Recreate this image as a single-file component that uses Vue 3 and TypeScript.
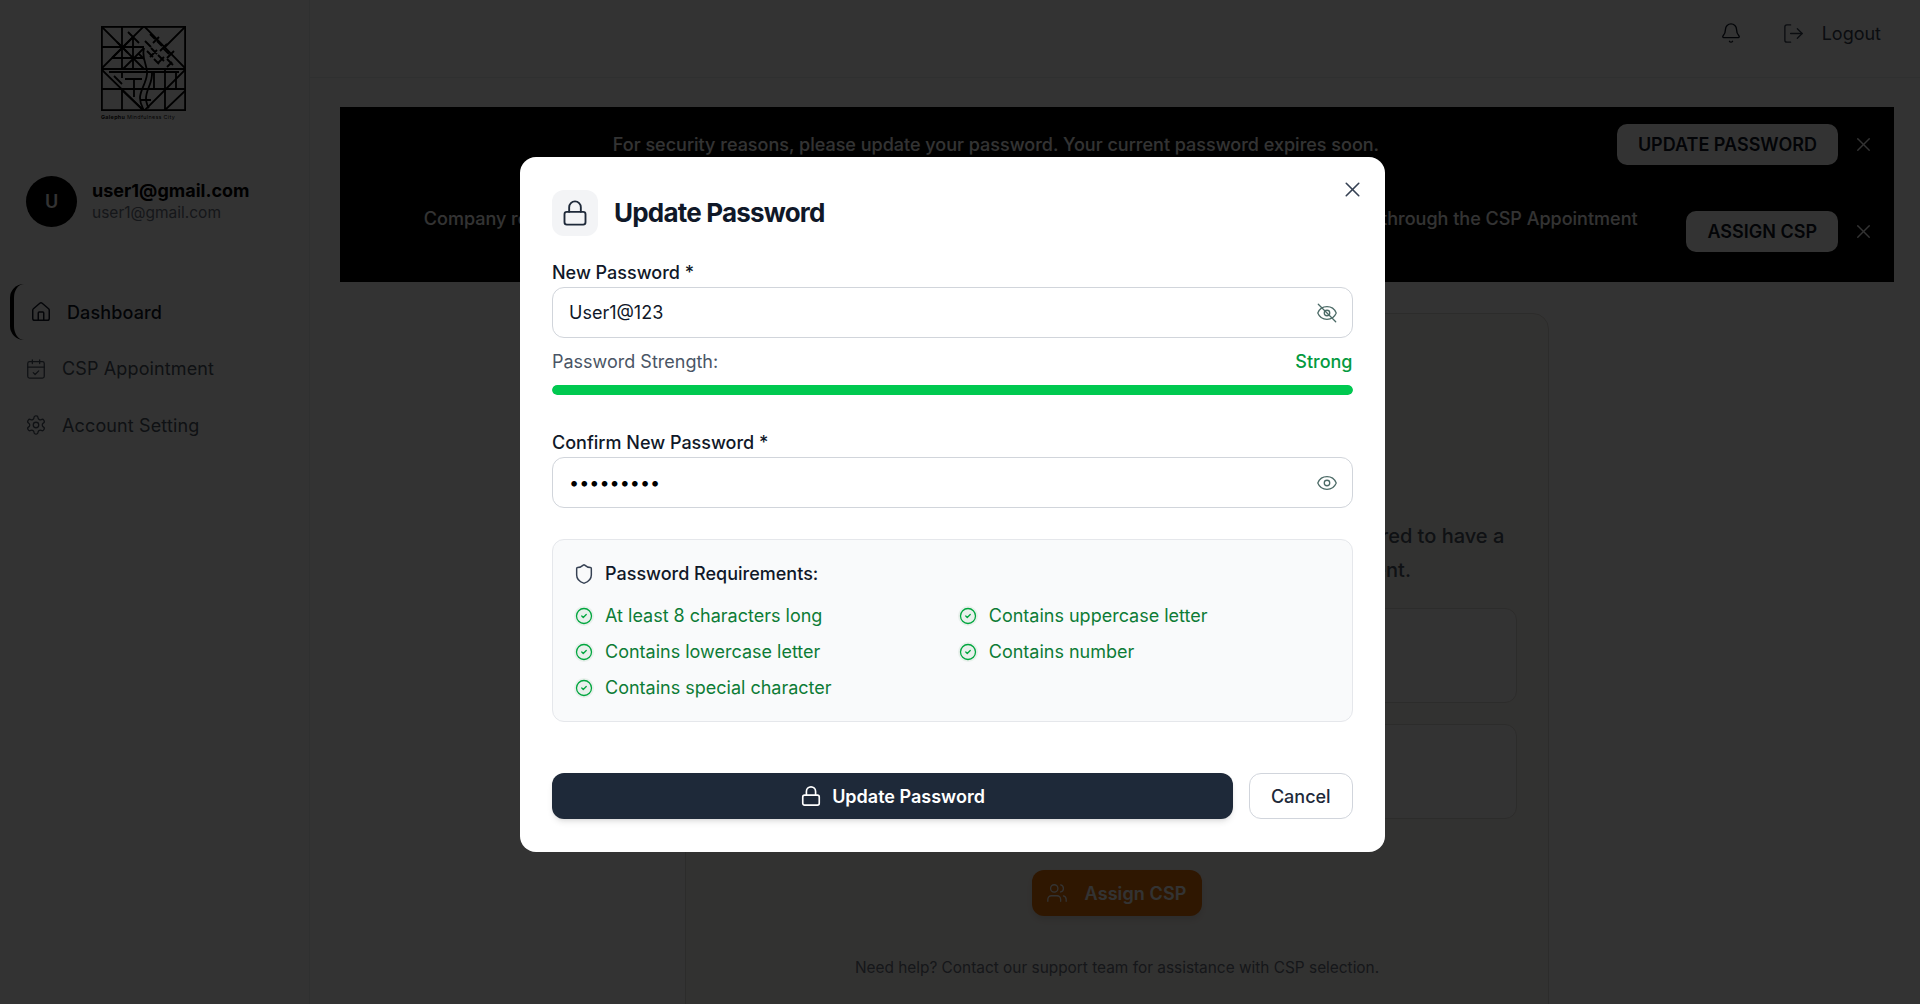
<script setup lang="ts">
import { h } from 'vue'

const paths: Record<string, string[]> = {
  home: ['M15 21v-8a1 1 0 0 0-1-1h-4a1 1 0 0 0-1 1v8', 'M3 10a2 2 0 0 1 .709-1.528l7-5.999a2 2 0 0 1 2.582 0l7 5.999A2 2 0 0 1 21 10v9a2 2 0 0 1-2 2H5a2 2 0 0 1-2-2z'],
  calendar: ['M8 2v4', 'M16 2v4', 'M5 4h14a2 2 0 0 1 2 2v14a2 2 0 0 1-2 2H5a2 2 0 0 1-2-2V6a2 2 0 0 1 2-2z', 'M3 10h18', 'm9 16 2 2 4-4'],
  gear: ['M12.22 2h-.44a2 2 0 0 0-2 2v.18a2 2 0 0 1-1 1.73l-.43.25a2 2 0 0 1-2 0l-.15-.08a2 2 0 0 0-2.73.73l-.22.38a2 2 0 0 0 .73 2.73l.15.1a2 2 0 0 1 1 1.72v.51a2 2 0 0 1-1 1.74l-.15.09a2 2 0 0 0-.73 2.73l.22.38a2 2 0 0 0 2.73.73l.15-.08a2 2 0 0 1 2 0l.43.25a2 2 0 0 1 1 1.73V20a2 2 0 0 0 2 2h.44a2 2 0 0 0 2-2v-.18a2 2 0 0 1 1-1.73l.43-.25a2 2 0 0 1 2 0l.15.08a2 2 0 0 0 2.73-.73l.22-.39a2 2 0 0 0-.73-2.73l-.15-.08a2 2 0 0 1-1-1.74v-.5a2 2 0 0 1 1-1.74l.15-.09a2 2 0 0 0 .73-2.73l-.22-.38a2 2 0 0 0-2.73-.73l-.15.08a2 2 0 0 1-2 0l-.43-.25a2 2 0 0 1-1-1.73V4a2 2 0 0 0-2-2z', 'M9 12a3 3 0 1 0 6 0a3 3 0 1 0-6 0'],
  bell: ['M10.268 21a2 2 0 0 0 3.464 0', 'M3.262 15.326A1 1 0 0 0 4 17h16a1 1 0 0 0 .74-1.673C19.41 13.956 18 12.499 18 8A6 6 0 0 0 6 8c0 4.499-1.411 5.956-2.738 7.326'],
  logout: ['M9 21H5a2 2 0 0 1-2-2V5a2 2 0 0 1 2-2h4', 'm16 17 5-5-5-5', 'M21 12H9'],
  lock: ['M5 11h14a2 2 0 0 1 2 2v7a2 2 0 0 1-2 2H5a2 2 0 0 1-2-2v-7a2 2 0 0 1 2-2z', 'M7 11V7a5 5 0 0 1 10 0v4'],
  eye: ['M2.062 12.348a1 1 0 0 1 0-.696 10.75 10.75 0 0 1 19.876 0 1 1 0 0 1 0 .696 10.75 10.75 0 0 1-19.876 0', 'M9 12a3 3 0 1 0 6 0a3 3 0 1 0-6 0'],
  eyeOff: ['M2.062 12.348a1 1 0 0 1 0-.696 10.75 10.75 0 0 1 19.876 0 1 1 0 0 1 0 .696 10.75 10.75 0 0 1-19.876 0', 'M9 12a3 3 0 1 0 6 0a3 3 0 1 0-6 0', 'M2.5 2.5l19 19'],
  x: ['M18 6 6 18', 'm6 6 12 12'],
  shield: ['M20 13c0 5-3.5 7.5-7.66 8.95a1 1 0 0 1-.67-.01C7.5 20.5 4 18 4 13V6a1 1 0 0 1 1-1c2 0 4.5-1.2 6.24-2.72a1.17 1.17 0 0 1 1.52 0C14.51 3.81 17 5 19 5a1 1 0 0 1 1 1z'],
  check: ['M2 12a10 10 0 1 0 20 0a10 10 0 1 0-20 0', 'm9 12 2 2 4-4'],
  users: ['M16 21v-2a4 4 0 0 0-4-4H6a4 4 0 0 0-4 4v2', 'M5 7a4 4 0 1 0 8 0a4 4 0 1 0-8 0', 'M22 21v-2a4 4 0 0 0-3-3.87', 'M16 3.13a4 4 0 0 1 0 7.75'],
}

const Icon = (p: { name: string; size: number; sw?: number }) =>
  h(
    'svg',
    {
      width: p.size,
      height: p.size,
      viewBox: '0 0 24 24',
      fill: 'none',
      stroke: 'currentColor',
      'stroke-width': p.sw ?? 2,
      'stroke-linecap': 'round',
      'stroke-linejoin': 'round',
      style: 'flex:none;display:block',
    },
    paths[p.name].map((d) => h('path', { d })),
  )
Icon.props = ['name', 'size', 'sw']

const requirements = [
  'At least 8 characters long',
  'Contains uppercase letter',
  'Contains lowercase letter',
  'Contains number',
  'Contains special character',
]
</script>

<template>
  <div class="page">
    <aside class="sidebar">
      <div class="logo">
        <svg width="85" height="85" viewBox="0 0 85 85" fill="none" stroke="#000" stroke-width="1.8">
          <rect x="0.9" y="0.9" width="83.2" height="83.2" />
          <path d="M43 0 85 43 43 85 0 43Z" />
          <path d="M0 0 43 43M85 0 64 21M21 64 43 85M63 85 85 64" />
          <path d="M21 0V43M0 21H43M0 43H85M8 46H78M0 63H85M21 63V85M64 43V85M75 46V63M53 46V63M21 46V52M24 53H41M33 53V71M13 50 21 58" />
          <path d="M11 32 32 11M22 43 43 22M32 11V43M11 32H43M27 6 38 17M16 16 27 27M38 28 43 33" />
          <path d="M43 22C40 32 47 40 46 48C45 58 39 64 39 72C39 78 42 82 43 85" />
          <path d="M51 46C52 58 44 64 45 74C46 79 47 81 48 82M39 74H50" />
          <path d="M49 8 54 13M44 15 50 21M56 15 61 20M50 22 56 28M62 22 68 28M57 29 63 35M46 25 52 31M53 33 58 38M66 33 72 39M58 11 52 17M66 18 59 25M73 25 66 32M56 24 49 31M63 31 57 37M71 36 66 41" stroke-width="1.9" />
        </svg>
        <div class="tagline"><b>Galephu</b> Mindfulness City</div>
      </div>

      <div class="user">
        <div class="avatar">U</div>
        <div>
          <div class="user-name">user1@gmail.com</div>
          <div class="user-mail">user1@gmail.com</div>
        </div>
      </div>

      <nav class="nav">
        <a class="nav-item active"><Icon name="home" :size="22" :sw="1.6" /><span>Dashboard</span></a>
        <a class="nav-item"><Icon name="calendar" :size="22" :sw="1.4" /><span>CSP Appointment</span></a>
        <a class="nav-item"><Icon name="gear" :size="22" :sw="1.4" /><span>Account Setting</span></a>
      </nav>
    </aside>

    <div class="main">
      <header class="topbar">
        <span class="bell"><Icon name="bell" :size="22" :sw="1.5" /></span>
        <span class="logout"><Icon name="logout" :size="23" :sw="1.4" /><span>Logout</span></span>
      </header>

      <div class="content">
        <section class="banner">
          <div class="banner-row first">
            <p class="banner-text">For security reasons, please update your password. Your current password expires soon.</p>
            <button class="banner-btn">UPDATE PASSWORD</button>
            <span class="banner-x"><Icon name="x" :size="23" :sw="1.4" /></span>
          </div>
          <div class="banner-row second">
            <p class="banner-text">Company registration requires one Certified Service Provider (CSP). Please make the required CSP assignment through the CSP Appointment<br />page.</p>
            <button class="banner-btn">ASSIGN CSP</button>
            <span class="banner-x"><Icon name="x" :size="23" :sw="1.4" /></span>
          </div>
        </section>

        <section class="card">
          <p class="card-text">To continue with these applications, your company is now also required to have a<br />Certified Service Provider assigned via the CSP Appointment.</p>
          <div class="card-box"></div>
          <div class="card-box second-box"></div>
          <button class="assign"><Icon name="users" :size="22" :sw="1.4" /><span>Assign CSP</span></button>
          <p class="help">Need help? Contact our support team for assistance with CSP selection.</p>
        </section>
      </div>
    </div>

    <div class="overlay"></div>

    <div class="modal">
      <button class="modal-x"><Icon name="x" :size="25" :sw="1.55" /></button>
      <div class="modal-head">
        <div class="head-icon"><Icon name="lock" :size="28" :sw="1.6" /></div>
        <h2>Update Password</h2>
      </div>

      <label class="label first-label">New Password *</label>
      <div class="input">
        <span class="value">User1@123</span>
        <span class="eye"><Icon name="eyeOff" :size="22" :sw="1.4" /></span>
      </div>

      <div class="strength">
        <span>Password Strength:</span>
        <span class="strong">Strong</span>
      </div>
      <div class="bar"><div class="bar-fill" :style="{ width: '100%' }"></div></div>

      <label class="label second-label">Confirm New Password *</label>
      <div class="input">
        <span class="dots">•••••••••</span>
        <span class="eye"><Icon name="eye" :size="22" :sw="1.4" /></span>
      </div>

      <div class="req">
        <div class="req-title"><Icon name="shield" :size="22" :sw="1.6" /><span>Password Requirements:</span></div>
        <div class="req-grid">
          <div v-for="r in requirements" :key="r" class="req-item">
            <span class="req-check"><Icon name="check" :size="18" :sw="1.7" /></span>
            <span>{{ r }}</span>
          </div>
        </div>
      </div>

      <div class="actions">
        <button class="primary"><Icon name="lock" :size="22" :sw="1.8" /><span>Update Password</span></button>
        <button class="cancel">Cancel</button>
      </div>
    </div>
  </div>
</template>

<style>
html, body { margin: 0; background: #fff; }
</style>

<style scoped>
* { box-sizing: border-box; }
p, h2 { margin: 0; }
button { font-family: inherit; }

.page {
  position: relative;
  display: flex;
  width: 1920px;
  height: 1004px;
  overflow: hidden;
  background: #fff;
  color: #111827;
  font-family: Inter, "Liberation Sans", sans-serif;
  font-size: 18px;
}

.sidebar {
  flex: none;
  width: 310px;
  border-right: 1px solid #eceef1;
  padding: 26px 10px 0;
}
.logo { margin-left: 91px; width: 85px; }
.logo svg { display: block; }
.tagline {
  margin-top: 2px;
  font-size: 5.4px;
  line-height: 8px;
  white-space: nowrap;
  letter-spacing: 0.32px;
  color: #111;
}
.user {
  display: flex;
  align-items: center;
  gap: 15px;
  margin: 55px 0 0 16px;
}
.avatar {
  width: 51px;
  height: 51px;
  border-radius: 50%;
  background: #000;
  color: #fff;
  display: flex;
  align-items: center;
  justify-content: center;
  font-weight: 600;
  font-size: 18px;
}
.user-name { font-weight: 700; font-size: 18px; line-height: 22px; color: #000; }
.user-mail { margin-top: 1px; font-size: 15.5px; line-height: 20px; color: #6b7280; }

.nav { margin-top: 57px; display: flex; flex-direction: column; gap: 0.5px; }
.nav-item {
  display: flex;
  align-items: center;
  gap: 15px;
  height: 56px;
  padding-left: 15px;
  color: #4b5563;
  font-size: 18px;
  font-weight: 400;
  letter-spacing: 0.13px;
}
.nav-item.active {
  border-left: 4px solid #000;
  border-radius: 14px;
  padding-left: 16px;
  color: #111827;
  font-weight: 500;
}

.main { flex: 1; min-width: 0; display: flex; flex-direction: column; }
.topbar {
  flex: none;
  height: 78px;
  border-bottom: 1px solid #eceef1;
  display: flex;
  align-items: center;
  justify-content: flex-end;
  padding: 0 39px 11px 0;
  color: #374151;
}
.bell { margin-right: 40px; color: #111827; }
.logout { display: flex; align-items: center; gap: 17px; }

.content { padding: 29px 26px 0 30px; }
.banner {
  background: #000;
  color: #fff;
  height: 175px;
  padding: 17px 19px 0 0;
}
.banner-row { display: flex; }
.banner-text {
  flex: 1;
  padding: 0 16px 0 51px;
  text-align: center;
  line-height: 26px;
  font-weight: 500;
  white-space: nowrap;
}
.first { height: 41px; align-items: center; margin-bottom: 46px; }
.second { height: 41px; align-items: flex-start; }
.second .banner-text { margin-top: -5px; }
.banner-btn {
  flex: none;
  height: 41px;
  padding: 0 21px;
  border: none;
  border-radius: 10px;
  background: #fff;
  color: #111827;
  font-size: 18px;
  font-weight: 600;
}
.banner-x { flex: none; margin-left: 14px; height: 41px; display: flex; align-items: center; }

.card {
  margin: 31px 0 0 345px;
  width: 864px;
  border: 1px solid #dcd9d4;
  border-radius: 16px;
  background: #fbf8f3;
  padding: 205px 31px 40px;
  text-align: center;
}
.card-text { font-size: 20px; line-height: 34px; font-weight: 500; color: #4b5563; white-space: nowrap; }
.card-box { height: 95px; margin-top: 21px; border: 1px solid #dcd9d4; border-radius: 12px; background: #fff; }
.second-box { margin-top: 21px; }
.assign {
  display: inline-flex;
  align-items: center;
  gap: 17px;
  height: 46px;
  margin-top: 51px;
  padding: 0 16px 0 14px;
  border: none;
  border-radius: 12px;
  background: #ea7306;
  color: #fff;
  font-size: 18px;
  font-weight: 600;
  letter-spacing: 0.1px;
  box-shadow: 0 4px 6px rgba(0, 0, 0, .1);
}
.help { margin-top: 40px; font-size: 15.4px; line-height: 24px; color: #6b7280; }

.overlay { position: absolute; inset: 0; background: rgba(0, 0, 0, .8); }

.modal {
  position: absolute;
  left: 520px;
  top: 157px;
  width: 864.5px;
  height: 695px;
  padding: 33px 32px 0;
  background: #fff;
  border-radius: 16px;
  color: #101828;
}
.modal-x {
  position: absolute;
  top: 19.5px;
  right: 20px;
  padding: 0;
  border: none;
  background: none;
  color: #364153;
}
.modal-head { display: flex; align-items: center; gap: 16px; height: 45px; }
.head-icon {
  width: 46px;
  height: 46px;
  border-radius: 12px;
  background: #f3f4f6;
  color: #1e2939;
  display: flex;
  align-items: center;
  justify-content: center;
}
h2 { font-size: 26px; font-weight: 700; letter-spacing: -0.8px; color: #101828; }

.label { display: block; font-weight: 500; line-height: 28px; }
.first-label { margin-top: 24px; }
.second-label { margin-top: 34px; }
.input {
  height: 51px;
  border: 1px solid #d1d5db;
  border-radius: 12px;
  padding: 0 16px;
  display: flex;
  align-items: center;
  justify-content: space-between;
}
.dots { font-size: 18px; color: #000; }
.eye { color: #4b6a66; margin-right: -2px; }
.strength {
  display: flex;
  justify-content: space-between;
  line-height: 28px;
  margin-top: 10px;
  color: #4a5565;
}
.strong { color: #049a3f; font-weight: 500; }
.bar { height: 10px; margin-top: 9px; border-radius: 999px; background: #e5e7eb; overflow: hidden; }
.bar-fill { height: 100%; border-radius: 999px; background: #00c950; }

.req {
  margin-top: 31px;
  height: 183px;
  border: 1px solid #e5e7eb;
  border-radius: 12px;
  background: #f9fafb;
  padding: 20px 21px;
}
.req-title { display: flex; align-items: center; gap: 10px; line-height: 28px; font-weight: 500; margin-left: -1px; }
.req-title svg { color: #364153; }
.req-grid { display: grid; grid-template-columns: 1fr 1fr; column-gap: 11px; row-gap: 8px; margin-top: 14px; }
.req-item { display: flex; align-items: center; gap: 11px; line-height: 28px; color: #0d7c36; }
.req-check {
  width: 20px;
  height: 20px;
  border-radius: 50%;
  background: #e9f0ec;
  color: #00a63e;
  display: flex;
  align-items: center;
  justify-content: center;
}

.actions { display: flex; gap: 16px; margin-top: 51px; }
.primary {
  flex: 1;
  height: 46px;
  display: flex;
  align-items: center;
  justify-content: center;
  gap: 10px;
  border: none;
  border-radius: 12px;
  background: #1e2939;
  color: #fff;
  font-size: 18px;
  font-weight: 600;
  box-shadow: 0 4px 6px -1px rgba(0, 0, 0, .1), 0 2px 4px -2px rgba(0, 0, 0, .1);
}
.cancel {
  flex: none;
  width: 103.5px;
  height: 46px;
  border: 1px solid #d1d5dc;
  border-radius: 12px;
  background: #fff;
  color: #1e2939;
  font-size: 18px;
  font-weight: 500;
}
</style>
